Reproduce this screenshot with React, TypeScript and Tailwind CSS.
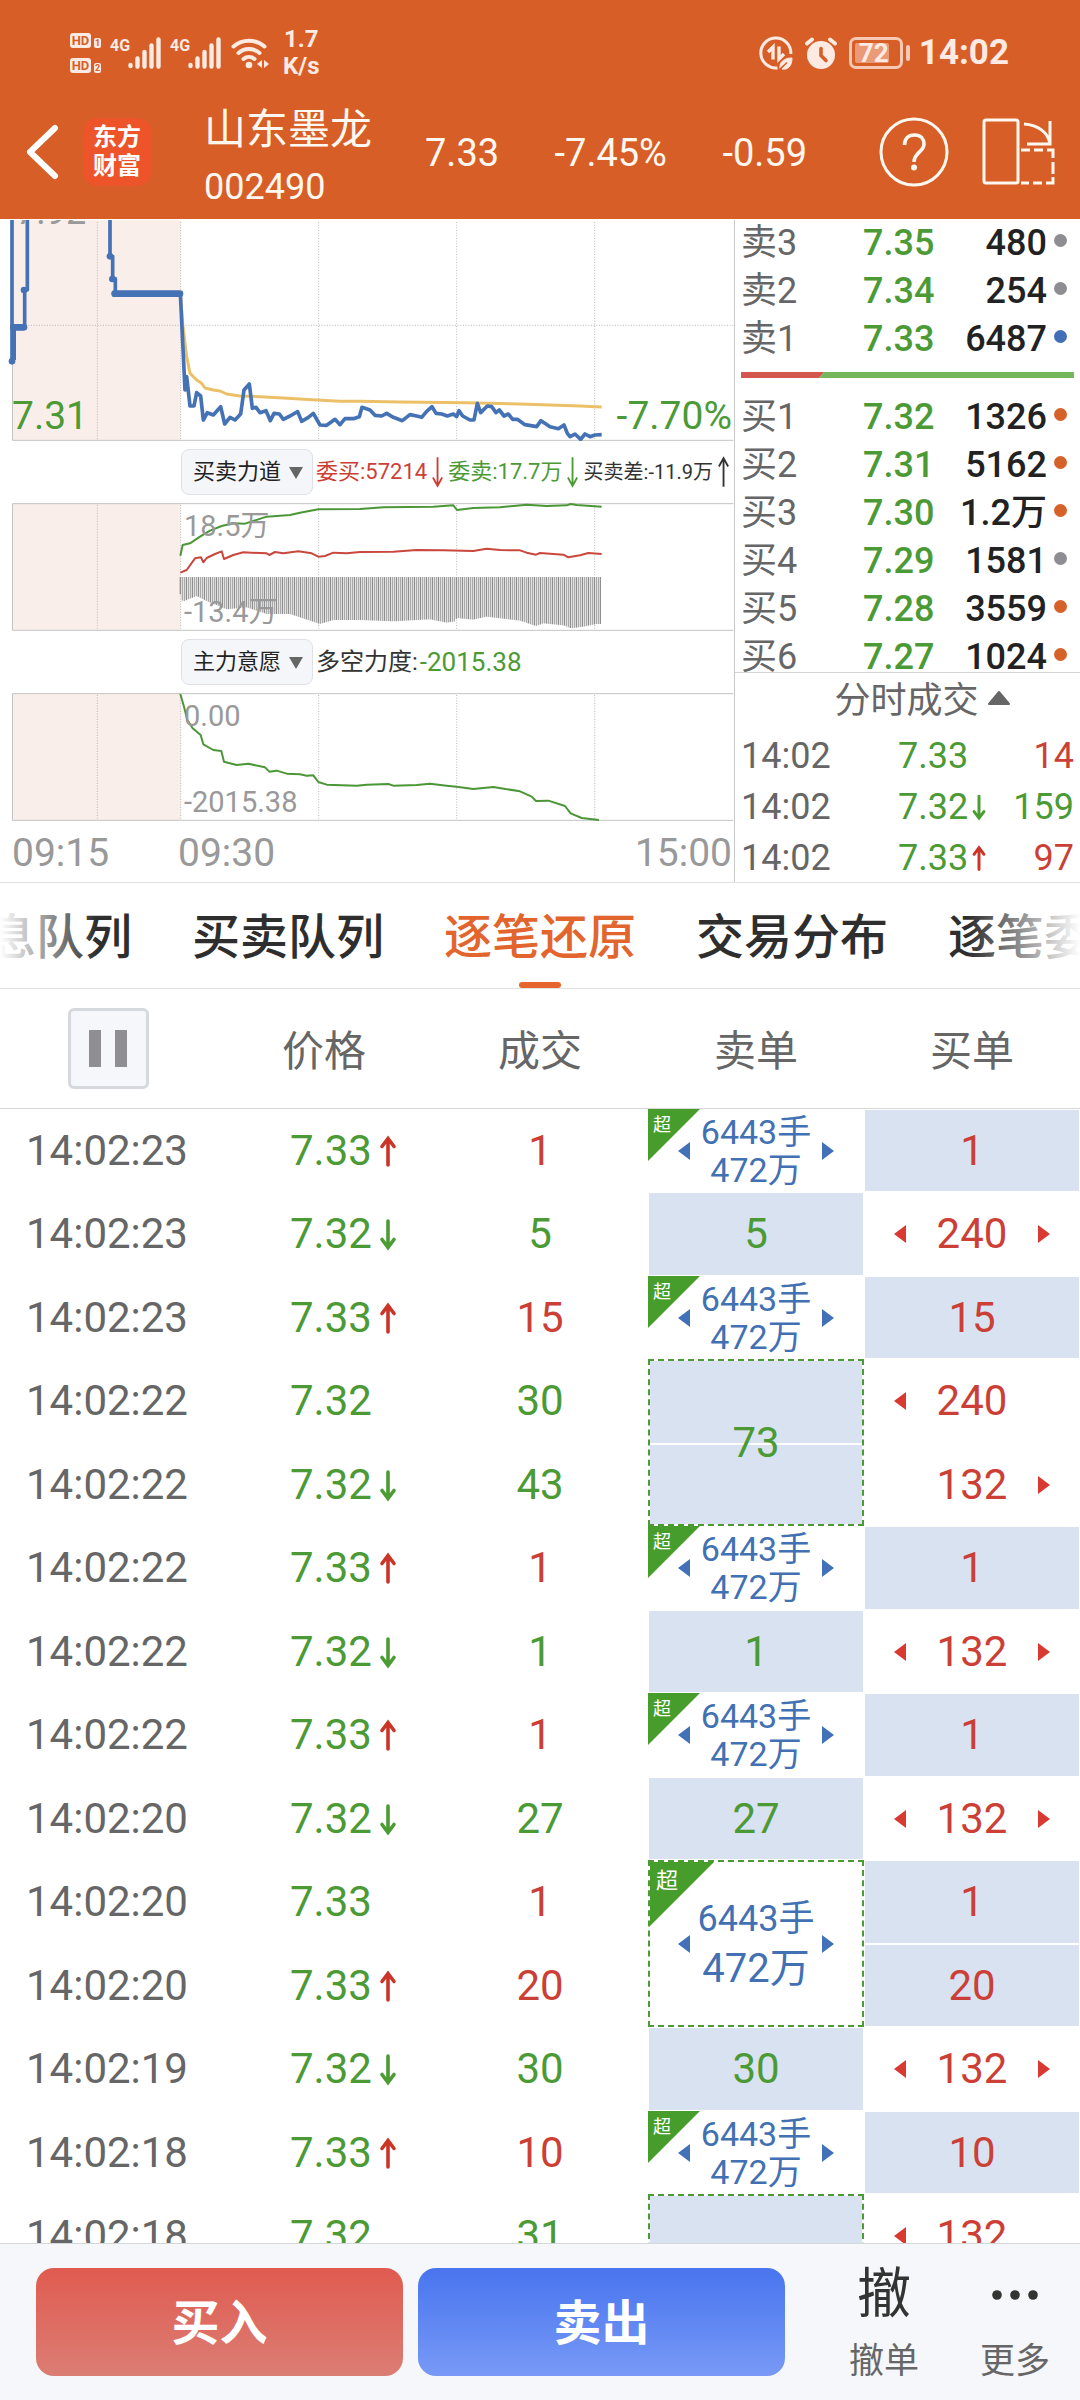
import type { ReactNode } from 'react';

type Tone = 'red' | 'green';
type Trend = 'up' | 'down' | null;

const TONE_TEXT: Record<Tone, string> = {
  red: 'text-[#cb3f36]',
  green: 'text-[#4b9a35]',
};

/* ---------- small drawings ---------- */

function TrendArrow({ trend, small = false }: { trend: Trend; small?: boolean }) {
  if (!trend) return null;
  return (
    <svg
      viewBox="0 0 18 34"
      className={small ? 'ml-[2px] h-[28px] w-[18px]' : 'h-[36px] w-[18px]'}
      fill="none"
      stroke={trend === 'up' ? '#cb3528' : '#4b9d33'}
      strokeWidth="3.600"
      strokeLinecap="round"
      aria-hidden="true"
    >
      {trend === 'up' ? <path d="M9 31V5M3 12.500 9 4.500l6 8" /> : <path d="M9 4v26M3 22.500l6 8 6-8" />}
    </svg>
  );
}

function Pointer({ side, color, hidden = false }: { side: 'left' | 'right'; color: string; hidden?: boolean }) {
  return (
    <svg viewBox="0 0 12 18" className={hidden ? 'invisible h-[18px] w-[12px]' : 'h-[18px] w-[12px]'} aria-hidden="true">
      <path d={side === 'left' ? 'M12 0v18L0 9z' : 'M0 0v18l12-9z'} fill={color} />
    </svg>
  );
}

function SignalBars() {
  return (
    <svg viewBox="0 0 33 32" className="h-[32px] w-[33px]" stroke="#fdeae2" strokeWidth="4.400" strokeLinecap="round" aria-hidden="true">
      <path d="M2.500 28v1M9.500 21.500v8M16.500 15v14.500M23.500 8.500v21M30.500 2.500v27" />
    </svg>
  );
}

function HdBadge({ slot }: { slot: string }) {
  return (
    <span className="flex items-end gap-[3px] text-[#d75f27]">
      <span className="flex h-[15px] w-[21px] items-center justify-center rounded-[3px] bg-[#fdeae2] text-[13px] leading-[15px] font-bold">HD</span>
      <span className="flex h-[10px] w-[7px] items-center justify-center rounded-[2px] bg-[#fdeae2] text-[9px] leading-[10px] font-bold">{slot}</span>
    </span>
  );
}

/* ---------- status bar and header ---------- */

function StatusBar() {
  return (
    <div className="flex h-[84px] items-center justify-between pt-[22px] pr-[71px] pl-[70px] text-[#fdeae2]">
      <div className="flex items-center">
        <div className="flex flex-col gap-[10px]">
          <HdBadge slot="1" />
          <HdBadge slot="2" />
        </div>
        {[0, 1].map((sim) => (
          <div key={sim} className="ml-[9px] flex items-start">
            <span className="w-[18px] text-[16px] leading-[18px] font-bold">4G</span>
            <SignalBars />
          </div>
        ))}
        <svg viewBox="0 0 38 32" className="ml-[10px] h-[32px] w-[38px]" fill="none" stroke="#fdeae2" strokeWidth="4" strokeLinecap="round" aria-hidden="true">
          <path d="M2.500 9.500a24 24 0 0 1 31 0M7.500 16a16 16 0 0 1 21 0M12.500 22a8.500 8.500 0 0 1 11 0" />
          <circle cx="18" cy="28" r="3.300" fill="#fdeae2" stroke="none" />
          <path d="M31 23v8l-5-4zM33 23v8l5-4z" fill="#fdeae2" stroke="none" />
        </svg>
        <div className="ml-[14px] text-center text-[24px] leading-[27px] font-bold">
          <div>1.7</div>
          <div>K/s</div>
        </div>
      </div>
      <div className="flex items-center">
        <svg viewBox="0 0 34 34" className="h-[34px] w-[34px]" fill="none" stroke="#fdeae2" strokeWidth="3" aria-hidden="true">
          <path d="M18.500 31.900A15 15 0 1 1 31.800 18" />
          <path d="M14 23.500V11l-5 5M20 10.500V23l5-5" strokeWidth="3.400" />
          <path d="M21 33c-1-7 4-11 12-11 0 8-4 12-10 11l5-6" fill="#fdeae2" strokeWidth="1" />
          <path d="M20 34l8-7.500" stroke="#d75f27" strokeWidth="1.500" />
        </svg>
        <svg viewBox="0 0 34 34" className="ml-[11px] h-[34px] w-[34px]" fill="none" stroke="#fdeae2" strokeWidth="4" strokeLinecap="round" aria-hidden="true">
          <circle cx="17" cy="19" r="14" fill="#fdeae2" stroke="none" />
          <path d="M3 7.500 8 3.500M31 7.500l-5-4" />
          <path d="M17 12.500v7l5 5" stroke="#d75f27" strokeWidth="3.600" />
        </svg>
        <div className="ml-[11px] flex items-center gap-[3px]">
          <span className="flex h-[32px] w-[54px] items-center rounded-[7px] border-[3px] border-[#f7c9b5] p-[3px]">
            <span className="flex h-full w-[34px] items-center justify-start rounded-[2px] bg-[#ea9a77] pl-[4px] text-[26px] leading-[20px] font-bold">
              72
            </span>
          </span>
          <span className="h-[16px] w-[4px] rounded-full bg-[#f7c9b5]" />
        </div>
        <span className="ml-[9px] text-[35px] leading-[40px] font-bold">14:02</span>
      </div>
    </div>
  );
}

function StockHeader() {
  return (
    <header className="flex h-[135px] items-center pr-[25px] pl-[26px] text-[#fff8f0]">
      <button type="button" aria-label="返回" className="flex h-[56px] w-[34px] items-center justify-center">
        <svg viewBox="0 0 34 56" className="h-[56px] w-[34px]" fill="none" stroke="#fff" strokeWidth="6" strokeLinecap="round" strokeLinejoin="round">
          <path d="M29 4 4 28l25 24" />
        </svg>
      </button>
      <div className="ml-[23px] flex h-[68px] w-[68px] flex-col items-center justify-center rounded-[14px] bg-[#ee5429] pb-[5px] font-['Noto_Sans_CJK_SC',sans-serif] text-[24px] leading-[29px] font-bold text-white">
        <span>东方</span>
        <span>财富</span>
      </div>
      <div className="ml-[53px] pt-[13px]">
        <h1 className="text-[42px] leading-[58px]">山东墨龙</h1>
        <p className="text-[36px] leading-[56px]">002490</p>
      </div>
      <div className="flex flex-1 items-center justify-between pt-[3px] pr-[72px] pl-[53px] text-[38px] leading-[48px]">
        <span>7.33</span>
        <span>-7.45%</span>
        <span>-0.59</span>
      </div>
      <button type="button" aria-label="帮助">
        <svg viewBox="0 0 70 70" className="h-[70px] w-[70px]" fill="none" stroke="#fff8f0" strokeWidth="3">
          <circle cx="35" cy="35" r="33" />
          <path d="M25.500 28c0-6 3.500-10 10-10s9.500 4 9.500 9c0 8-10 8.500-10 18" strokeWidth="3.600" />
          <circle cx="35" cy="50.500" r="3" fill="#fff8f0" stroke="none" />
        </svg>
      </button>
      <button type="button" aria-label="横屏" className="ml-[33px]">
        <svg viewBox="0 0 73 70" className="h-[70px] w-[73px]" fill="none" stroke="#fff8f0" strokeWidth="3">
          <rect x="2" y="3" width="34" height="63" rx="2" />
          <path d="M42 7c14 1 24 8 26 20M68 4v23H45" />
          <path d="M39 33h9m4 0h9m4 0h6v8m0 4v12m0 3v6h-7m-4 0h-9m-4 0h-8" />
        </svg>
      </button>
    </header>
  );
}

/* ---------- charts ---------- */

const GRID_X = [292, 542, 956, 1370, 1784];

const PRICE_LINE =
  '541,250 555,540 560,500 570,588 582,588 590,548 602,558 610,630 622,608 640,615 662,590 674,642 690,622 705,630 722,612 732,540 748,522 757,595 768,592 780,608 798,602 811,632 822,610 838,612 850,628 870,618 893,605 905,634 925,622 940,610 960,645 980,646 1005,628 1020,644 1035,626 1060,626 1078,620 1086,592 1110,600 1125,616 1145,618 1160,610 1180,622 1207,632 1230,614 1250,618 1265,622 1280,604 1296,590 1308,610 1325,612 1342,618 1360,612 1370,620 1377,602 1388,618 1410,630 1422,630 1432,580 1442,608 1462,588 1475,590 1488,608 1498,600 1512,618 1525,612 1538,628 1552,628 1575,644 1610,650 1623,632 1650,650 1675,656 1692,645 1702,670 1710,680 1725,672 1742,688 1755,672 1770,680 1785,675 1805,674';
const AVERAGE_LINE =
  '541,250 548,340 555,400 560,440 570,490 590,510 605,520 615,534 640,540 660,543 680,552 720,558 780,560 850,564 950,570 1020,574 1080,574 1200,576 1400,578 1560,582 1650,585 1740,588 1805,591';
const ASK_LINE =
  '541,197 548,165 570,160 600,140 630,122 665,108 700,100 735,101 800,80 870,75 900,68 955,58 1080,57 1150,52 1300,50 1360,46 1371,60 1420,54 1500,52 1580,44 1640,48 1700,46 1712,42 1730,45 1805,50';
const BID_LINE =
  '541,248 560,240 585,205 603,202 610,217 620,204 645,192 665,184 672,207 700,195 730,187 800,190 808,195 825,186 850,190 895,184 935,190 955,200 975,198 1000,188 1040,190 1080,186 1180,185 1250,180 1330,181 1420,183 1460,176 1500,180 1560,181 1580,188 1608,194 1620,189 1690,194 1705,202 1740,196 1765,189 1805,192';
const WILL_LINE =
  '541,612 552,650 562,690 578,715 602,735 610,763 640,780 664,783 672,815 710,825 745,821 795,832 808,845 830,842 860,851 900,853 920,857 940,856 955,876 980,884 1070,887 1100,884 1165,882 1180,887 1250,885 1290,881 1340,887 1370,890 1420,897 1480,891 1560,904 1595,920 1608,933 1645,932 1695,948 1712,970 1745,984 1797,990';

const BAR_TOP = 261;
const BAR_PROFILE: [number, number][] = [
  [541, 313], [548, 335], [590, 318], [620, 333], [680, 358], [740, 352], [800, 372], [870, 372], [960, 402], [1000, 390],
  [1080, 390], [1180, 394], [1290, 388], [1340, 398], [1366, 394], [1370, 384], [1420, 389], [1460, 380], [1560, 392],
  [1608, 408], [1630, 400], [1690, 406], [1714, 415], [1750, 410], [1790, 402], [1806, 402],
];

function barBottom(x: number) {
  const i = BAR_PROFILE.findIndex(([px]) => px > x);
  if (i <= 0) return BAR_PROFILE[0][1];
  const [x0, y0] = BAR_PROFILE[i - 1];
  const [x1, y1] = BAR_PROFILE[i];
  return y0 + ((y1 - y0) * (x - x0)) / (x1 - x0);
}

const BARS = Array.from({ length: 211 }, (_, i) => 541 + i * 6);

function Plot({ top, height, label, openTop = false, children }: { top: number; height: number; label: string; openTop?: boolean; children: ReactNode }) {
  const bottom = top + height - 2;
  return (
    <svg viewBox={`0 ${top} 2202 ${height}`} className="block h-auto w-full" role="img" aria-label={label}>
      <rect x="37" y={top} width="505" height={height - 2} fill="#f9eee9" />
      <g stroke="#b9b9b9" strokeWidth="3" strokeDasharray="3 5">
        {GRID_X.map((x) => (
          <path key={x} d={`M${x} ${top + 6}V${bottom}`} />
        ))}
        {openTop && <path d="M37 346H2200" />}
      </g>
      <path d={openTop ? `M37.500 ${top}V${bottom}H2200` : `M2200 ${top + 2}H37.500V${bottom}H2200`} fill="none" stroke="#c4c4c4" strokeWidth="3" />
      {children}
    </svg>
  );
}

function IndicatorSelect({ id, label, value }: { id: string; label: string; value: string }) {
  return (
    <label htmlFor={id} className="relative block">
      <span className="sr-only">{label}</span>
      <select
        id={id}
        defaultValue={value}
        className="h-[46px] w-[132px] appearance-none rounded-[8px] border border-[#dfe1e6] bg-[#f5f6fa] pl-[11px] text-[22px] leading-[30px] text-[#222]"
      >
        <option>{value}</option>
      </select>
      <svg viewBox="0 0 14 12" className="pointer-events-none absolute top-[18px] right-[10px] h-[12px] w-[14px]" aria-hidden="true">
        <path d="M0 0h14L7 12z" fill="#666" />
      </svg>
    </label>
  );
}

function ThinArrow({ up = false, color }: { up?: boolean; color: string }) {
  return (
    <svg viewBox="0 0 12 34" className="mx-[5px] h-[34px] w-[12px]" fill="none" stroke={color} strokeWidth="2" aria-hidden="true">
      {up ? <path d="M6 33V2M1 11l5-9 5 9" /> : <path d="M6 1v31M1 23l5 9 5-9" />}
    </svg>
  );
}

function ChartPanel() {
  return (
    <section className="min-w-0 flex-1">
      <div className="relative overflow-hidden">
        <span className="absolute -top-[28px] left-[16px] text-[36px] leading-[40px] text-[#999]">7.92</span>
        <Plot top={30} height={663} label="分时走势" openTop>
          <polyline points={AVERAGE_LINE} fill="none" stroke="#ecc068" strokeWidth="9" strokeLinejoin="round" />
          <g fill="none" stroke="#4472b5" strokeLinejoin="round">
            <path d="M36 30V453M74 352V240H82V30M330 30V139H338V206H346V250" strokeWidth="11" />
            <path d="M42 450V352" strokeWidth="12" />
            <path d="M40 352H72M344 251H540" strokeWidth="20" strokeLinecap="round" />
            <polyline points={PRICE_LINE} strokeWidth="11" />
          </g>
          <g fill="#4472b5">
            <circle cx="36" cy="454" r="10" />
            <circle cx="72" cy="240" r="10" />
            <circle cx="330" cy="139" r="10" />
            <circle cx="337" cy="207" r="10" />
            <circle cx="345" cy="251" r="10" />
          </g>
        </Plot>
        <span className="absolute bottom-[3px] left-[12px] text-[39px] leading-[44px] text-[#4b9a35]">7.31</span>
        <span className="absolute right-[2px] bottom-[3px] text-[39px] leading-[44px] text-[#4b9a35]">-7.70%</span>
      </div>

      <div className="flex h-[62px] items-center pl-[181px] text-[22px] leading-[30px] whitespace-nowrap">
        <IndicatorSelect id="indicator-force" label="指标一" value="买卖力道" />
        <span className="ml-[3px] text-[#cb3f36]">委买:57214</span>
        <ThinArrow color="#cb3f36" />
        <span className="text-[#4b9a35]">委卖:17.7万</span>
        <ThinArrow color="#4b9a35" />
        <span className="text-[20px] text-[#333]">买卖差:-11.9万</span>
        <ThinArrow up color="#333" />
      </div>

      <div className="relative">
        <Plot top={39} height={384} label="买卖力道">
          {BARS.map((x, i) => (
            <rect key={x} x={x - 2} y={BAR_TOP} width="4" height={barBottom(x) - BAR_TOP} fill={i % 3 === 0 ? '#8f8f8f' : '#a9a9a9'} />
          ))}
          <polyline points={ASK_LINE} fill="none" stroke="#4b9636" strokeWidth="6" strokeLinejoin="round" />
          <polyline points={BID_LINE} fill="none" stroke="#c9473d" strokeWidth="6" strokeLinejoin="round" />
        </Plot>
        <span className="absolute top-[6px] left-[184px] text-[29px] leading-[34px] text-[#999]">18.5万</span>
        <span className="absolute bottom-[2px] left-[184px] text-[29px] leading-[34px] text-[#999]">-13.4万</span>
      </div>

      <div className="flex h-[62px] items-center pl-[181px] text-[24px] leading-[30px] whitespace-nowrap">
        <IndicatorSelect id="indicator-will" label="指标二" value="主力意愿" />
        <span className="ml-[3px] text-[#333]">多空力度:</span>
        <span className="ml-[2px] text-[26px] text-[#4b9a35]">-2015.38</span>
      </div>

      <div className="relative">
        <Plot top={609} height={384} label="主力意愿">
          <polyline points={WILL_LINE} fill="none" stroke="#4b9636" strokeWidth="6" strokeLinejoin="round" />
        </Plot>
        <span className="absolute top-[6px] left-[184px] text-[29px] leading-[34px] text-[#999]">0.00</span>
        <span className="absolute bottom-[2px] left-[184px] text-[29px] leading-[34px] text-[#999]">-2015.38</span>
      </div>

      <div className="flex h-[61px] items-center pt-[2px] pr-[2px] pl-[12px] text-[39px] leading-[44px] text-[#999]">
        <span className="w-[166px]">09:15</span>
        <span className="flex-1">09:30</span>
        <span>15:00</span>
      </div>
    </section>
  );
}

/* ---------- order book ---------- */

const DOT = { gray: 'bg-[#8e8d93]', blue: 'bg-[#4170b8]', orange: 'bg-[#d6622b]' };
type Level = [string, string, string, keyof typeof DOT];

const ASKS: Level[] = [
  ['卖3', '7.35', '480', 'gray'],
  ['卖2', '7.34', '254', 'gray'],
  ['卖1', '7.33', '6487', 'blue'],
];
const BIDS: Level[] = [
  ['买1', '7.32', '1326', 'orange'],
  ['买2', '7.31', '5162', 'orange'],
  ['买3', '7.30', '1.2万', 'orange'],
  ['买4', '7.29', '1581', 'gray'],
  ['买5', '7.28', '3559', 'orange'],
  ['买6', '7.27', '1024', 'orange'],
];

function LevelRow({ level: [name, price, volume, dot] }: { level: Level }) {
  return (
    <li className="flex h-[48px] items-center pt-[2px] pr-[13px] pl-[6px] text-[36px] leading-[46px] font-medium">
      <span className="w-[122px] font-normal text-[#666]">{name}</span>
      <span className="text-[#4b9a35]">{price}</span>
      <span className="flex-1 text-right text-[#222]">{volume}</span>
      <span className={`mb-[6px] ml-[7px] h-[13px] w-[13px] rounded-full ${DOT[dot]}`} />
    </li>
  );
}

const TICKS: [string, string, Trend, string, Tone][] = [
  ['14:02', '7.33', null, '14', 'red'],
  ['14:02', '7.32', 'down', '159', 'green'],
  ['14:02', '7.33', 'up', '97', 'red'],
];

function OrderBook() {
  return (
    <aside className="flex w-[346px] shrink-0 flex-col border-l border-[#c8c8c8]">
      <div className="h-[453px] overflow-hidden border-b border-[#d4d4d4]">
        <ul className="-mt-[2px]">
          {ASKS.map((l) => (
            <LevelRow key={l[0]} level={l} />
          ))}
        </ul>
        <div className="flex h-[30px] pt-[10px] pr-[6px] pl-[6px]">
          <div className="h-[6px] w-1/4 bg-[#d3574f] [clip-path:polygon(0_0,100%_0,calc(100%_-_5px)_100%,0_100%)]" />
          <div className="-ml-[5px] h-[6px] flex-1 bg-[#74b65b] [clip-path:polygon(5px_0,100%_0,100%_100%,0_100%)]" />
        </div>
        <ul>
          {BIDS.map((l) => (
            <LevelRow key={l[0]} level={l} />
          ))}
        </ul>
      </div>
      <button type="button" className="flex h-[56px] items-center justify-center gap-[9px] pl-[29px] text-[36px] leading-[48px] text-[#666]">
        分时成交
        <svg viewBox="0 0 22 14" className="mb-[6px] h-[14px] w-[22px]" aria-hidden="true">
          <path d="M11 1 21 13H1z" fill="#666" stroke="#666" strokeWidth="2" strokeLinejoin="round" />
        </svg>
      </button>
      <ul>
        {TICKS.map(([time, price, trend, volume, tone]) => (
          <li key={volume} className="flex h-[51px] items-center pt-[2px] pr-[6px] pl-[6px] text-[36px] leading-[48px]">
            <span className="w-[157px] text-[#666]">{time}</span>
            <span className="text-[#4b9a35]">{price}</span>
            <TrendArrow trend={trend} small />
            <span className={`flex-1 text-right ${TONE_TEXT[tone]}`}>{volume}</span>
          </li>
        ))}
      </ul>
    </aside>
  );
}

/* ---------- tabs ---------- */

const TABS = ['消息队列', '买卖队列', '逐笔还原', '交易分布', '逐笔委托'];

function Tabs() {
  return (
    <nav className="relative flex h-[107px] shrink-0 justify-center gap-[60px] overflow-hidden border-y border-[#e2e2e2] text-[48px] leading-[64px] font-medium">
      {TABS.map((tab) => {
        const active = tab === '逐笔还原';
        return (
          <button
            key={tab}
            type="button"
            aria-pressed={active}
            className={`relative flex shrink-0 items-center justify-center pt-[4px] whitespace-nowrap ${active ? 'text-[#e2652e]' : 'text-[#2e2e2e]'}`}
          >
            {tab}
            {active && <span className="absolute bottom-0 h-[6px] w-[42px] rounded-[3px] bg-[#e8642d]" />}
          </button>
        );
      })}
      <span className="pointer-events-none absolute inset-y-0 left-0 w-[96px] bg-gradient-to-r from-white to-transparent" />
      <span className="pointer-events-none absolute inset-y-0 right-0 w-[112px] bg-gradient-to-l from-white to-transparent" />
    </nav>
  );
}

/* ---------- tick-by-tick table ---------- */

type Sell = { kind: 'big'; span: 1 | 2 } | { kind: 'plain'; text: string; span: 1 | 2 };
type Buy = { text: string; left?: boolean; right?: boolean };
type Row = { time: string; price: string; trend: Trend; volume: string; tone: Tone; sell?: Sell; buy: Buy };

const row = (time: string, price: string, trend: Trend, volume: string, tone: Tone, sell: Sell | undefined, buy: Buy): Row => ({
  time: `14:02:${time}`,
  price,
  trend,
  volume,
  tone,
  sell,
  buy,
});

const big = (span: 1 | 2 = 1): Sell => ({ kind: 'big', span });
const plain = (text: string, span: 1 | 2 = 1): Sell => ({ kind: 'plain', text, span });

const ROWS: Row[] = [
  row('23', '7.33', 'up', '1', 'red', big(), { text: '1' }),
  row('23', '7.32', 'down', '5', 'green', plain('5'), { text: '240', left: true, right: true }),
  row('23', '7.33', 'up', '15', 'red', big(), { text: '15' }),
  row('22', '7.32', null, '30', 'green', plain('73', 2), { text: '240', left: true }),
  row('22', '7.32', 'down', '43', 'green', undefined, { text: '132', right: true }),
  row('22', '7.33', 'up', '1', 'red', big(), { text: '1' }),
  row('22', '7.32', 'down', '1', 'green', plain('1'), { text: '132', left: true, right: true }),
  row('22', '7.33', 'up', '1', 'red', big(), { text: '1' }),
  row('20', '7.32', 'down', '27', 'green', plain('27'), { text: '132', left: true, right: true }),
  row('20', '7.33', null, '1', 'red', big(2), { text: '1' }),
  row('20', '7.33', 'up', '20', 'red', undefined, { text: '20' }),
  row('19', '7.32', 'down', '30', 'green', plain('30'), { text: '132', left: true, right: true }),
  row('18', '7.33', 'up', '10', 'red', big(), { text: '10' }),
  row('18', '7.32', null, '31', 'green', plain(''), { text: '132', left: true }),
];

function SellCell({ sell, open }: { sell: Sell; open: boolean }) {
  const merged = sell.span === 2;
  if (sell.kind === 'plain') {
    return (
      <td
        rowSpan={sell.span}
        className={
          merged
            ? 'relative border-2 border-dashed border-[#4b9a35] bg-[#d9e2f0] bg-clip-padding text-center text-[#4b9a35]'
            : open
              ? 'border-2 border-b-0 border-dashed border-[#4b9a35] bg-[#d9e2f0] bg-clip-padding'
              : 'border border-white bg-[#d9e2f0] text-center text-[#4b9a35]'
        }
      >
        {merged && <span className="absolute inset-x-0 top-1/2 h-[2px] bg-white" />}
        <span className="relative">{sell.text}</span>
      </td>
    );
  }
  return (
    <td rowSpan={sell.span} className={merged ? 'relative border-2 border-dashed border-[#4b9a35]' : 'relative'}>
      <span
        className={
          merged
            ? 'absolute top-0 left-0 h-[64px] w-[64px] bg-[#479d2c] pt-[8px] pl-[6px] text-[22px] leading-[22px] text-white [clip-path:polygon(0_0,100%_0,0_100%)]'
            : 'absolute top-0 left-0 h-[52px] w-[52px] bg-[#479d2c] pt-[7px] pl-[5px] text-[18px] leading-[18px] text-white [clip-path:polygon(0_0,100%_0,0_100%)]'
        }
      >
        超
      </span>
      <div className="flex items-center justify-center text-[#4271b3]">
        <Pointer side="left" color="#4271b8" />
        <div className={merged ? 'w-[132px] text-center text-[36px] leading-[50px]' : 'w-[132px] text-center text-[34px] leading-[38px]'}>
          <div>6443手</div>
          <div className={merged ? 'text-[40px]' : ''}>472万</div>
        </div>
        <Pointer side="right" color="#4271b8" />
      </div>
    </td>
  );
}

function TickTable() {
  return (
    <main className="min-h-0 flex-1 overflow-hidden">
      <table className="w-full table-fixed border-separate border-spacing-0">
        <thead>
          <tr className="h-[120px] text-[42px] leading-[56px] text-[#666]">
            <th scope="col" className="border-b border-[#d8d8d8] font-normal">
              <button type="button" aria-label="暂停" className="mx-auto flex h-[81px] w-[81px] items-center justify-center gap-[14px] rounded-[6px] border-[3px] border-[#d5d9de] bg-[#f5f7fb]">
                <span className="h-[37px] w-[12px] bg-[#8f8e92]" />
                <span className="h-[37px] w-[12px] bg-[#8f8e92]" />
              </button>
            </th>
            {['价格', '成交', '卖单', '买单'].map((h) => (
              <th key={h} scope="col" className="border-b border-[#d8d8d8] pt-[6px] font-normal">
                {h}
              </th>
            ))}
          </tr>
        </thead>
        <tbody className="text-[42px] leading-[50px]">
          {ROWS.map((r, i) => (
            <tr key={i} className="odd:h-[83px] even:h-[84px]">
              <td className="pl-[26px] whitespace-nowrap text-[#666]">{r.time}</td>
              <td className="pl-[74px]">
                <span className="flex items-center gap-[7px] text-[#4b9a35]">
                  {r.price}
                  <TrendArrow trend={r.trend} />
                </span>
              </td>
              <td className={`text-center ${TONE_TEXT[r.tone]}`}>{r.volume}</td>
              {r.sell && <SellCell sell={r.sell} open={i === ROWS.length - 1} />}
              {r.buy.left || r.buy.right ? (
                <td className="text-[#cb3f36]">
                  <span className="flex items-center justify-center">
                    <Pointer side="left" color="#d83a32" hidden={!r.buy.left} />
                    <span className="w-[132px] text-center">{r.buy.text}</span>
                    <Pointer side="right" color="#d83a32" hidden={!r.buy.right} />
                  </span>
                </td>
              ) : (
                <td className="border border-white bg-[#d9e2f0] text-center text-[#cb3f36]">{r.buy.text}</td>
              )}
            </tr>
          ))}
        </tbody>
      </table>
    </main>
  );
}

/* ---------- bottom bar ---------- */

function BottomBar() {
  return (
    <footer className="flex h-[157px] shrink-0 items-center border-t border-[#d5d9dc] bg-[#f5f7fa] pr-[23px] pl-[36px]">
      <div className="flex flex-1 gap-[15px] text-[48px] leading-[64px] font-bold text-white">
        <button type="button" className="h-[108px] flex-1 rounded-[18px] bg-gradient-to-b from-[#e05a50] to-[#db7d74] pt-[4px]">
          买入
        </button>
        <button type="button" className="h-[108px] flex-1 rounded-[18px] bg-gradient-to-b from-[#4874ee] to-[#7899f6] pt-[4px]">
          卖出
        </button>
      </div>
      <button type="button" className="ml-[34px] flex w-[130px] flex-col items-center pt-[10px]">
        <span className="text-[54px] leading-[70px] text-[#333]">撤</span>
        <span className="text-[35px] leading-[64px] text-[#666]">撤单</span>
      </button>
      <button type="button" className="flex w-[108px] flex-col items-center pt-[10px] pl-[24px]">
        <span className="flex h-[70px] items-center">
          <svg viewBox="0 0 46 10" className="h-[10px] w-[46px]" fill="#333" aria-hidden="true">
            <circle cx="5" cy="5" r="4.800" />
            <circle cx="23" cy="5" r="4.800" />
            <circle cx="41" cy="5" r="4.800" />
          </svg>
        </span>
        <span className="text-[35px] leading-[64px] text-[#666]">更多</span>
      </button>
    </footer>
  );
}

export default function App() {
  return (
    <div className="flex h-screen flex-col overflow-hidden bg-white font-['Roboto','Noto_Sans_CJK_SC',sans-serif]">
      <div className="shrink-0 bg-[#d75f27]">
        <StatusBar />
        <StockHeader />
      </div>
      <div className="flex shrink-0 pt-px">
        <ChartPanel />
        <OrderBook />
      </div>
      <Tabs />
      <TickTable />
      <BottomBar />
    </div>
  );
}
